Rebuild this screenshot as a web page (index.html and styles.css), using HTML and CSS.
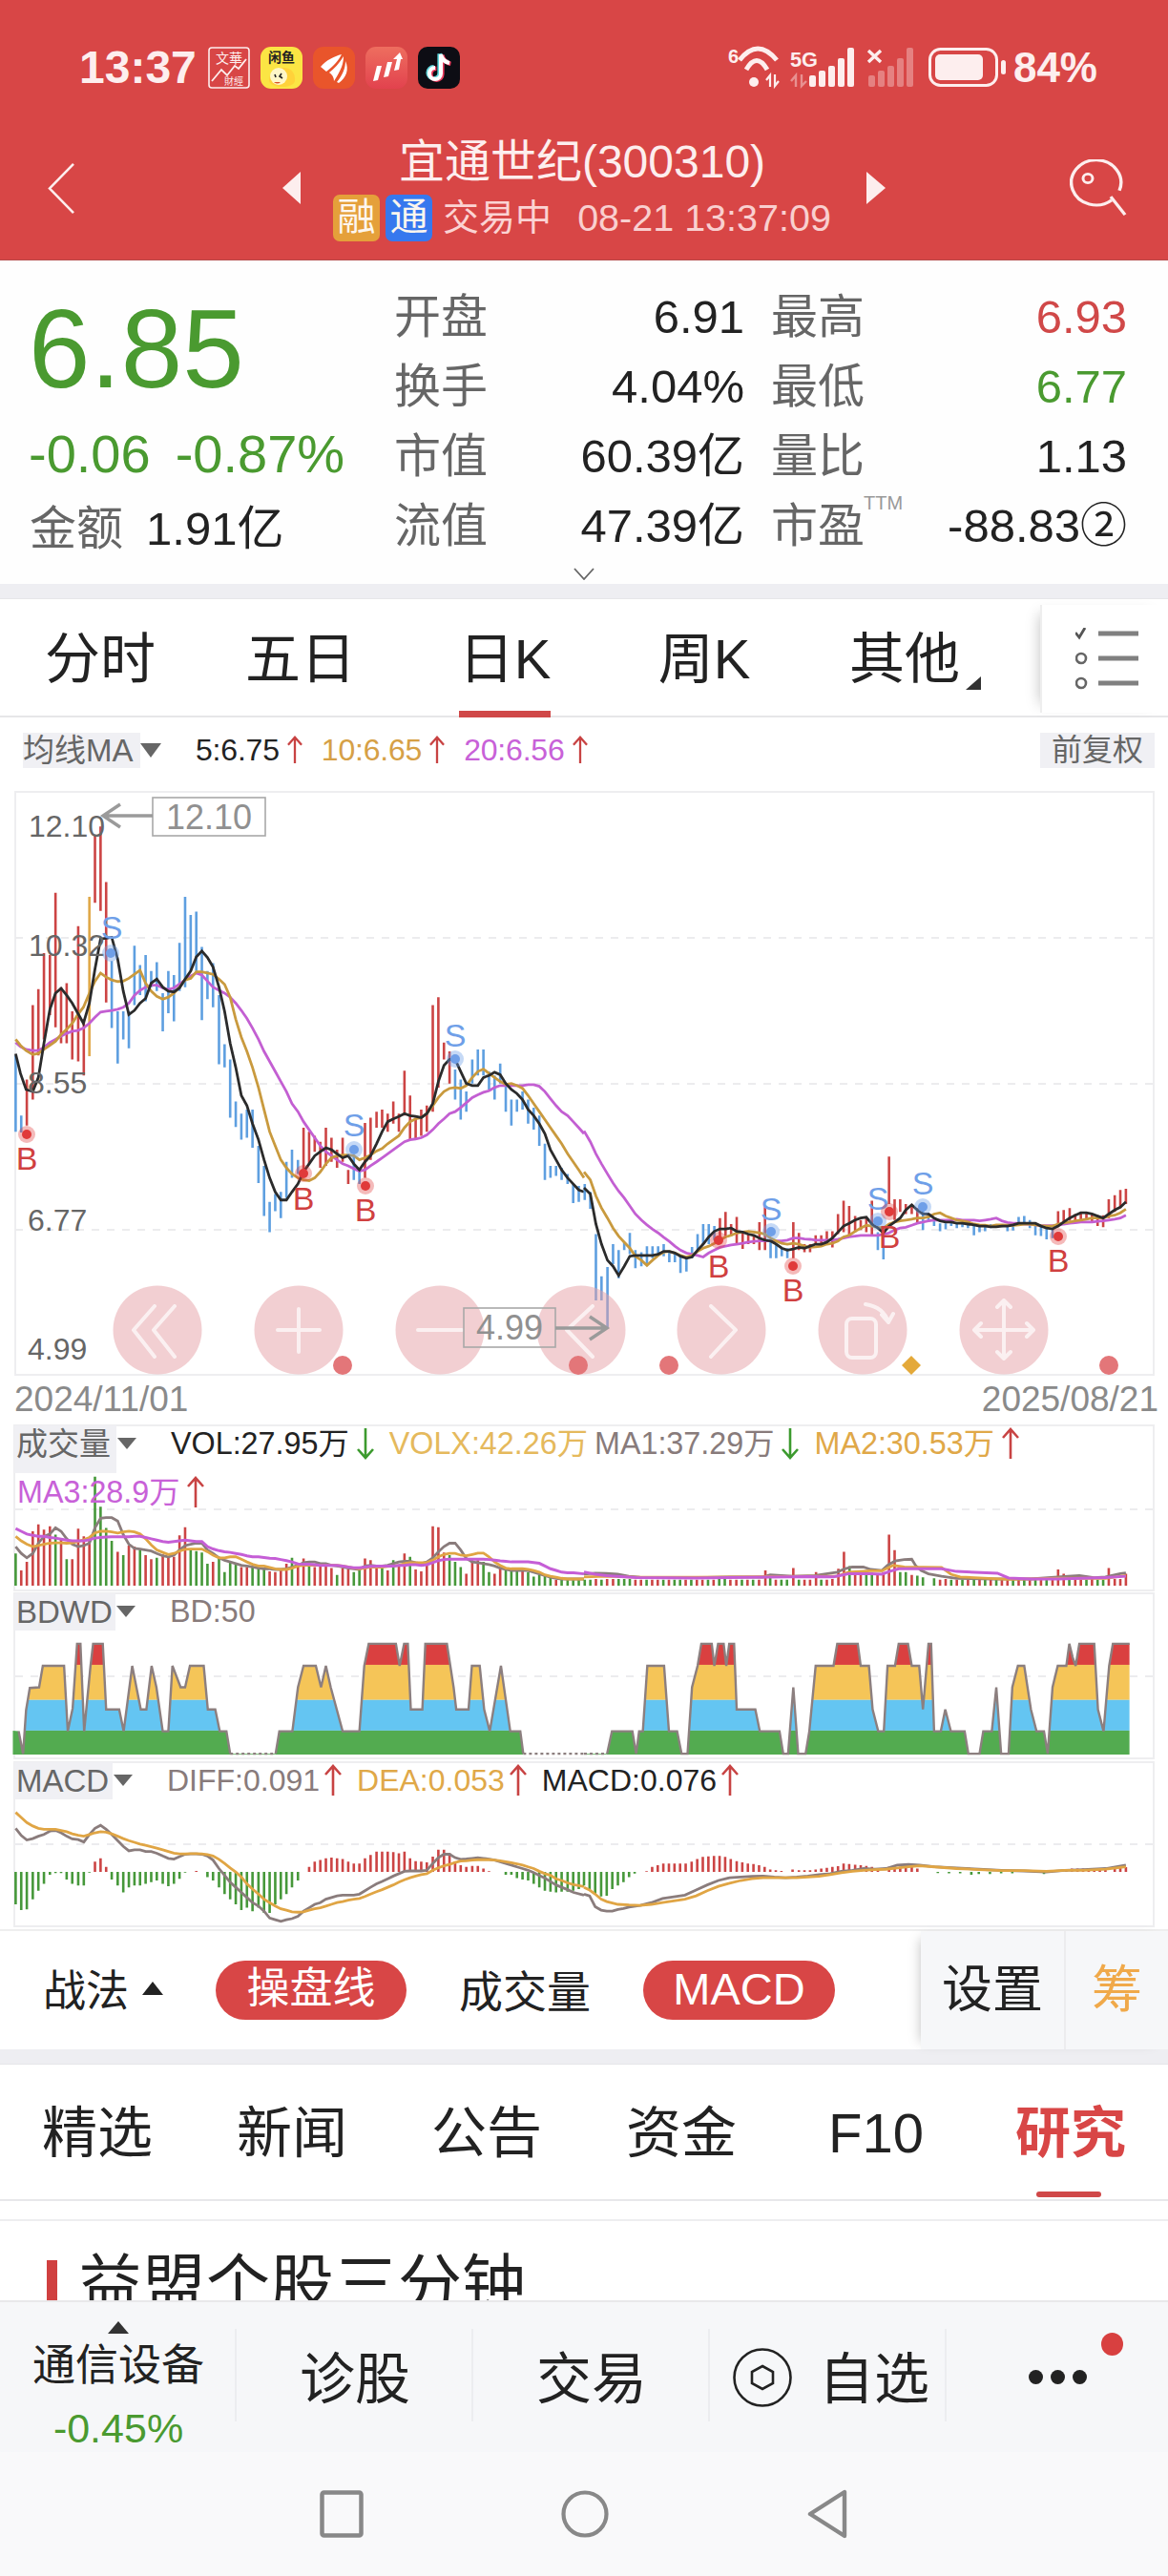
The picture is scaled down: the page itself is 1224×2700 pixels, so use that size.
FILE: index.html
```html
<!DOCTYPE html>
<html lang="zh-CN">
<head>
<meta charset="utf-8">
<title>宜通世纪(300310)</title>
<link rel="stylesheet" href="styles.css">
</head>
<body>
<svg class="defs" width="0" height="0" aria-hidden="true">
  <symbol id="arrow-up" viewBox="0 0 20 34"><path d="M10 33V2M2 11L10 2L18 11" fill="none" stroke="currentColor" stroke-width="2.6"/></symbol>
  <symbol id="arrow-down" viewBox="0 0 20 34"><path d="M10 1V32M2 23L10 32L18 23" fill="none" stroke="currentColor" stroke-width="2.6"/></symbol>
</svg>
<div class="page">
<header class="header">
  <div class="status">
    <span class="time">13:37</span>
    <div class="apps">
      <svg class="app" viewBox="0 0 44 44"><rect x="1" y="1" width="42" height="42" rx="3" fill="none" stroke="#fdeeee" stroke-width="1.6"/><text x="22" y="17" class="app-t" text-anchor="middle" font-size="14">文華</text><path d="M4 36L14 24L20 30L28 20L32 23L40 13" fill="none" stroke="#fdeeee" stroke-width="1.8"/><text x="27" y="40" class="app-t" text-anchor="middle" font-size="10">財經</text></svg>
      <svg class="app" viewBox="0 0 44 44"><rect width="44" height="44" rx="11" fill="#fbe544"/><text x="22" y="16" text-anchor="middle" font-size="14" font-weight="700" fill="#222" class="app-cjk">闲鱼</text><path d="M9 36C9 26 15 22 24 22C32 22 37 28 36 36C34 44 12 44 9 36Z" fill="#ffd23a"/><circle cx="19" cy="31" r="9" fill="#fff7c8"/><path d="M15 29l1 3M22 28l-2 3l3 2" stroke="#222" stroke-width="1.6" fill="none"/><path d="M14 37q4 3 7 0z" fill="#d8552a"/></svg>
      <svg class="app" viewBox="0 0 44 44"><rect width="44" height="44" rx="11" fill="#e9552b"/><path d="M8 21C14 14 22 10 30 8C27 14 22 20 14 26ZM17 27C22 23 28 17 32 10C32 17 30 24 22 36C22 32 20 29 17 27ZM25 37C31 30 34 22 34 15C38 24 35 32 27 38Z" fill="#fff"/></svg>
      <svg class="app" viewBox="0 0 44 44"><defs><linearGradient id="gr" x1="0" y1="0" x2="0" y2="1"><stop offset="0" stop-color="#ee6e5f"/><stop offset="1" stop-color="#e2424e"/></linearGradient></defs><rect width="44" height="44" rx="11" fill="url(#gr)"/><path d="M8 36L12 20L17 20L13 35ZM19 32L23 16L28 16L24 31ZM30 25L33 13L29 13L36 6L39 13L37 13L35 24Z" fill="#fff"/></svg>
      <svg class="app" viewBox="0 0 44 44"><rect width="44" height="44" rx="10" fill="#0d0d14"/><path d="M24 8V28A6 6 0 1 1 18 22M24 8C25 13 28 16 33 17" fill="none" stroke="#5fd6dc" stroke-width="4.4" transform="translate(-1.4 -0.8)"/><path d="M24 8V28A6 6 0 1 1 18 22M24 8C25 13 28 16 33 17" fill="none" stroke="#ee3b5e" stroke-width="4.4" transform="translate(1.4 0.8)"/><path d="M24 8V28A6 6 0 1 1 18 22M24 8C25 13 28 16 33 17" fill="none" stroke="#fff" stroke-width="4"/></svg>
    </div>
    <div class="sys">
      <svg class="net" viewBox="762 49 195 44">
        <text x="763" y="66" class="net-t" font-size="20">6</text>
        <g fill="none" stroke="#fdeeee" stroke-width="5"><path d="M775 63Q794 39 814 63"/><path d="M782 73Q793 54 804 73"/></g>
        <circle cx="790" cy="86" r="5" fill="#fdeeee"/>
        <path d="M807 91V79L803 84M812 78V90L816 85" fill="none" stroke="#fdeeee" stroke-width="2.2"/>
        <text x="828" y="70" class="net-t" font-size="22" textLength="29" lengthAdjust="spacingAndGlyphs">5G</text>
        <path d="M834 91V79L829 85M840 78V90L845 85" fill="none" stroke="#fdeeee" stroke-width="2.4" opacity=".45"/>
        <g fill="#fdeeee"><rect x="848" y="79" width="7" height="12" rx="2"/><rect x="858" y="74" width="7" height="17" rx="2"/><rect x="868" y="69" width="7" height="22" rx="2"/><rect x="878" y="61" width="7" height="30" rx="2"/><rect x="888" y="50" width="7" height="41" rx="2"/></g>
        <path d="M910 53L923 65M923 53L910 65" stroke="#fdeeee" stroke-width="3.4"/>
        <g fill="#fdeeee" opacity=".35"><rect x="910" y="79" width="7" height="12" rx="2"/><rect x="920" y="74" width="7" height="17" rx="2"/><rect x="930" y="69" width="7" height="22" rx="2"/><rect x="940" y="61" width="7" height="30" rx="2"/><rect x="950" y="50" width="7" height="41" rx="2"/></g>
      </svg>
      <svg class="batt" viewBox="0 0 81 44"><rect x="1.5" y="2.5" width="70" height="38" rx="11" fill="none" stroke="#fdeeee" stroke-width="3"/><rect x="7" y="8" width="50" height="27" rx="5" fill="#fdeeee"/><rect x="76" y="14" width="5" height="15" rx="2.5" fill="#fdeeee"/></svg>
      <span class="pct">84%</span>
    </div>
  </div>
  <div class="titlebar">
    <svg class="back" viewBox="0 0 28 56" preserveAspectRatio="none"><path d="M27 1L2 28L27 55" fill="none" stroke="#fdeeee" stroke-width="2.6"/></svg>
    <span class="tri-l"></span>
    <div class="title-block">
      <div class="title">宜通世纪(300310)</div>
      <div class="sub">
        <span class="badge badge-o">融</span><span class="badge badge-b">通</span>
        <span class="trading">交易中</span><span class="stamp">08-21 13:37:09</span>
      </div>
    </div>
    <span class="tri-r"></span>
    <svg class="search" viewBox="0 0 60 66" preserveAspectRatio="none"><path d="M44 47A26 26 0 1 1 52 36" fill="none" stroke="#fdeeee" stroke-width="3.4"/><circle cx="19" cy="22" r="5" fill="none" stroke="#fdeeee" stroke-width="3"/><path d="M43 43L58 64" stroke="#fdeeee" stroke-width="3.4"/></svg>
  </div>
</header>

<section class="quote">
  <div class="last">6.85</div>
  <div class="lab c2 r1">开盘</div><div class="val c3 r1">6.91</div><div class="lab c4 r1">最高</div><div class="val c5 r1 up">6.93</div>
  <div class="lab c2 r2">换手</div><div class="val c3 r2">4.04%</div><div class="lab c4 r2">最低</div><div class="val c5 r2 down">6.77</div>
  <div class="chg">-0.06<span class="chg-p">-0.87%</span></div>
  <div class="lab c2 r3">市值</div><div class="val c3 r3">60.39亿</div><div class="lab c4 r3">量比</div><div class="val c5 r3">1.13</div>
  <div class="amt"><span class="amt-l">金额</span><span class="amt-v">1.91亿</span></div>
  <div class="lab c2 r4">流值</div><div class="val c3 r4">47.39亿</div><div class="lab c4 r4 ttm-cell">市盈<span class="ttm">TTM</span></div><div class="val c5 r4">-88.83②</div>
  <svg class="more" viewBox="0 0 22 13" preserveAspectRatio="none"><path d="M1 1L11 12L21 1" fill="none" stroke="#666" stroke-width="1.8"/></svg>
</section>
<div class="band band-a"></div>

<nav class="tabs">
  <div class="tab"><span>分时</span></div>
  <div class="tab"><span>五日</span></div>
  <div class="tab tab-on"><span>日K</span></div>
  <div class="tab tab-week"><span>周K</span></div>
  <div class="tab tab-more"><span>其他</span></div>
  <div class="tab-menu">
    <svg viewBox="0 0 66 66" width="66" height="66"><path d="M0 5L4 10L10 0" fill="none" stroke="#555" stroke-width="2.8"/><circle cx="6" cy="32" r="5" fill="none" stroke="#666" stroke-width="2.6"/><circle cx="6" cy="58" r="5" fill="none" stroke="#666" stroke-width="2.6"/><path d="M24 6H66M24 32H66M24 58H66" stroke="#808080" stroke-width="5"/></svg>
  </div>
</nav>

<div class="ma-row">
  <span class="chip">均线MA</span><span class="caret"></span>
  <span class="ma ma-first c-black">5:6.75</span><svg class="ar ar-up"><use href="#arrow-up"/></svg>
  <span class="ma c-orange">10:6.65</span><svg class="ar ar-up"><use href="#arrow-up"/></svg>
  <span class="ma c-mag">20:6.56</span><svg class="ar ar-up"><use href="#arrow-up"/></svg>
  <span class="chip chip-end">前复权</span>
</div>

<svg class="kline c" viewBox="0 820 1224 622" width="1224" height="622">
  <rect x="16" y="830" width="1193" height="611" fill="none" stroke="#eeeef0" stroke-width="2"/>
  <path d="M16 983H1209M16 1136H1209M16 1289H1209" stroke="#ececee" stroke-width="2" stroke-dasharray="8 8" fill="none"/>
  <g transform="translate(0 820) scale(.3903 .4209)" fill="none">
    <path class="b" d="M42 680V870M57 830V872M300 445V612M316 570V700M331 570V640M346 570V662M361 407V555M376 455V530M391 430V545M406 470V510M421 448V520M437 525V620M452 470V575M467 480V595M482 400V520M497 285V510M512 330V470M527 322V470M542 410V592M557 470V540M572 450V560M588 530V702M603 652V710M618 690V835M633 795V858M648 825V890M663 815V885M678 815V910M694 905V998M709 955V1080M724 1045V1120M739 1025V1068M754 1020V1085M769 945V1035M784 915V985M800 940V975M950 930V990M965 960V1000M1222 715V790M1237 740V840M1252 770V820M1268 690V750M1283 665V730M1298 665V730M1313 720V765M1328 730V790M1343 700V750M1358 750V820M1373 790V855M1388 790V820M1403 770V815M1418 790V850M1433 810V865M1448 830V905M1463 900V990M1478 955V985M1493 955V980M1508 960V990M1524 975V1000M1539 1000V1048M1554 1005V1045"/>
    <path class="r" d="M72 740V855M88 555V790M103 515V680M118 425V640M134 430V580M149 275V610M164 510V650M179 500V650M194 570V690M210 358V695M225 590V730M255 130V300M270 110V320M285 248V548M815 860V965M830 870V950M845 880V920M860 895V960M875 860V955M890 885V945M905 915V960M920 885V945M935 965V1000M980 848V985M995 835V940M1011 820V860M1026 815V860M1041 825V870M1056 795V850M1071 825V870M1086 718V830M1101 780V890M1116 835V890M1131 815V880M1146 805V870M1162 555V820M1177 535V760M1192 648V690M1207 670V750"/>
    <path class="o" d="M240 285V682"/>
    <polyline class="l-mag" points="42,648 55,658 70,665 88,668 103,668 118,660 134,648 149,640 164,632 179,625 194,620 209,618 224,612 240,600 255,585 270,572 285,570 300,568 316,565 331,560 346,550 361,530 376,518 391,510 406,505 421,505 437,512 452,516 467,512 482,502 497,492 512,482 527,475 542,480 557,495 572,510 588,518 603,525 618,535 633,550 648,568 663,588 678,612 694,640 709,670 724,695 739,720 754,745 769,770 784,800 800,820 815,845 830,865 845,885 860,905 875,920 890,930 905,940 920,950 935,955 950,962 965,968 980,965 995,955 1011,945 1026,935 1041,925 1056,915 1071,905 1086,895 1101,890 1116,888 1131,885 1146,878 1162,865 1177,850 1192,838 1207,825 1222,820 1237,810 1252,798 1268,785 1283,778 1298,772 1313,768 1328,760 1343,755 1358,755 1373,755 1388,755 1403,755 1418,753 1433,753 1448,757 1463,770 1478,788 1493,805 1508,820 1524,830 1539,845 1554,860 1568,875"/>
    <polyline class="l-ora" points="42,640 55,655 70,668 88,678 103,675 118,665 134,655 149,645 164,628 179,615 194,600 209,578 224,560 240,525 255,495 270,475 285,485 300,492 316,496 331,495 346,488 361,478 376,468 391,500 406,520 421,533 437,540 452,535 467,525 482,510 497,492 512,488 527,472 542,472 557,475 572,478 588,490 603,503 618,535 633,590 648,635 663,670 678,710 694,760 709,815 724,870 739,905 754,940 769,960 784,975 800,985 815,990 830,992 845,985 860,970 875,950 890,935 905,930 920,928 935,928 950,930 965,940 980,935 995,928 1011,918 1026,912 1041,900 1056,890 1071,880 1086,860 1101,845 1116,838 1131,835 1146,825 1162,805 1177,785 1192,770 1207,762 1222,760 1237,762 1252,755 1268,735 1283,720 1298,714 1313,725 1328,735 1343,745 1358,752 1373,750 1388,755 1403,762 1418,780 1433,800 1448,820 1463,840 1478,860 1493,880 1508,900 1524,925 1539,945 1554,965 1568,985"/>
    <polyline class="l-blk" points="42,676 55,725 70,765 88,770 103,735 118,650 134,565 149,525 164,513 179,530 194,550 209,575 224,600 240,550 255,465 270,390 285,388 300,386 316,440 331,520 346,578 361,568 376,550 391,538 406,500 421,490 437,510 452,520 467,522 482,512 497,490 512,470 527,435 542,420 557,436 572,460 588,510 603,570 618,650 633,710 648,780 663,805 678,850 694,890 709,940 724,985 739,1020 754,1040 769,1040 784,1020 800,1000 815,970 830,950 845,930 860,920 875,910 890,915 905,925 920,935 935,930 950,950 965,965 980,945 995,930 1011,900 1026,870 1041,845 1056,838 1071,832 1086,825 1101,830 1116,832 1131,835 1146,825 1162,800 1177,745 1192,705 1207,690 1222,690 1237,720 1252,750 1268,755 1283,755 1298,735 1313,730 1328,722 1343,728 1358,750 1373,765 1388,775 1403,790 1418,815 1433,830 1448,850 1463,875 1478,915 1493,940 1508,965 1524,985 1539,1000 1554,1015 1568,1020"/>
  </g>
  <g transform="translate(612 820) scale(.3903 .4209)" fill="none">
    <path class="b" d="M2 1000V1040M17 1020V1062M32 1125V1290M47 1230V1290M63 1207V1358M78 1150V1200M93 1165V1235M108 1145V1165M123 1122V1175M138 1165V1210M154 1170V1205M169 1155V1200M184 1155V1185M199 1155V1180M214 1150V1180M229 1170V1195M244 1175V1195M259 1180V1222M275 1185V1218M290 1157V1185M305 1125V1165M320 1100V1150M335 1100V1150M350 1105V1140M501 1140V1185M516 1150V1185M531 1160V1180M546 1160V1185M789 1120V1165M804 1120V1188M910 1065V1115M925 1075V1095M940 1090V1105M956 1098V1118M971 1098V1113M986 1095V1105M1001 1095V1110M1016 1097V1108M1031 1097V1110M1047 1100V1128M1062 1105V1120M1077 1105V1118M1092 1100V1110M1107 1100V1108M1122 1100V1108M1137 1105V1118M1152 1100V1116M1167 1082V1105M1182 1080V1100M1197 1090V1110M1212 1100V1128M1227 1105V1130M1242 1112V1138M1258 1110V1135"/>
    <path class="r" d="M365 1085V1145M380 1070V1130M395 1100V1130M410 1082V1150M426 1120V1162M441 1125V1150M456 1130V1150M471 1095V1165M486 1055V1165M562 1095V1185M577 1122V1165M592 1150V1170M607 1150V1170M622 1128V1150M637 1128V1150M652 1118V1150M667 1118V1158M682 1075V1125M697 1042V1120M712 1055V1130M728 1080V1120M743 1090V1115M758 1085V1120M773 1042V1130M819 932V1050M834 1038V1090M849 1038V1070M864 1050V1075M880 1050V1075M895 1060V1095M1273 1068V1108M1288 1065V1098M1304 1060V1092M1319 1075V1095M1334 1070V1090M1349 1070V1090M1364 1075V1095M1379 1078V1105M1394 1078V1108M1409 1038V1085M1425 1028V1070M1440 1015V1060M1455 1012V1050"/>
    <polyline class="l-mag" points="0,868 17,895 32,925 47,950 63,975 78,998 93,1018 108,1035 123,1055 138,1075 154,1090 169,1102 184,1113 199,1122 214,1133 229,1143 244,1155 259,1165 275,1172 290,1175 305,1178 320,1182 335,1172 350,1165 365,1158 380,1155 395,1152 410,1150 426,1148 441,1145 456,1143 471,1142 486,1142 501,1142 516,1142 531,1142 546,1140 562,1135 577,1135 592,1137 607,1138 622,1140 637,1140 652,1140 667,1140 682,1138 697,1135 712,1132 728,1130 743,1128 758,1128 773,1128 789,1128 804,1125 819,1122 834,1115 849,1110 864,1108 880,1103 895,1098 910,1095 925,1092 940,1090 956,1090 971,1090 986,1090 1001,1088 1016,1090 1031,1090 1047,1090 1062,1092 1077,1090 1092,1088 1107,1085 1122,1092 1137,1096 1152,1098 1167,1098 1182,1100 1197,1100 1212,1102 1227,1104 1242,1104 1258,1104 1273,1103 1288,1100 1304,1098 1319,1097 1334,1095 1349,1095 1364,1095 1379,1093 1394,1092 1409,1090 1425,1088 1440,1085 1455,1078"/>
    <polyline class="l-ora" points="0,970 17,990 32,1030 47,1060 63,1085 78,1110 93,1130 108,1145 123,1160 138,1180 154,1190 169,1203 184,1190 199,1178 214,1170 229,1168 244,1172 259,1178 275,1182 290,1178 305,1168 320,1160 335,1155 350,1148 365,1140 380,1132 395,1128 410,1122 426,1120 441,1118 456,1120 471,1122 486,1125 501,1135 516,1142 531,1148 546,1150 562,1148 577,1150 592,1155 607,1158 622,1157 637,1155 652,1150 667,1148 682,1142 697,1132 712,1128 728,1118 743,1110 758,1103 773,1105 789,1108 804,1110 819,1100 834,1095 849,1092 864,1090 880,1088 895,1085 910,1085 925,1082 940,1075 956,1072 971,1080 986,1085 1001,1090 1016,1092 1031,1095 1047,1100 1062,1102 1077,1103 1092,1105 1107,1102 1122,1102 1137,1103 1152,1103 1167,1102 1182,1100 1197,1100 1212,1102 1227,1104 1242,1105 1258,1105 1273,1100 1288,1097 1304,1095 1319,1092 1334,1090 1349,1088 1364,1085 1379,1085 1394,1085 1409,1080 1425,1078 1440,1072 1455,1063"/>
    <polyline class="l-blk" points="0,1010 17,1025 32,1100 47,1150 63,1190 78,1205 93,1228 108,1205 123,1180 138,1178 154,1178 169,1178 184,1178 199,1175 214,1168 229,1168 244,1172 259,1180 275,1185 290,1182 305,1165 320,1150 335,1132 350,1118 365,1112 380,1112 395,1110 410,1118 426,1120 441,1125 456,1128 471,1135 486,1140 501,1142 516,1150 531,1160 546,1165 562,1162 577,1158 592,1160 607,1155 622,1150 637,1150 652,1145 667,1135 682,1120 697,1105 712,1098 728,1090 743,1085 758,1083 773,1100 789,1110 804,1122 819,1105 834,1095 849,1085 864,1065 880,1052 895,1065 910,1075 925,1075 940,1085 956,1092 971,1095 986,1095 1001,1098 1016,1098 1031,1100 1047,1102 1062,1105 1077,1105 1092,1107 1107,1107 1122,1105 1137,1105 1152,1102 1167,1098 1182,1098 1197,1098 1212,1098 1227,1105 1242,1110 1258,1112 1273,1105 1288,1095 1304,1085 1319,1078 1334,1072 1349,1072 1364,1075 1379,1080 1394,1085 1409,1075 1425,1065 1440,1058 1455,1045"/>
  </g>
  <g class="axis">
    <text x="30" y="877">12.10</text><text x="30" y="1002">10.32</text><text x="29" y="1146">8.55</text><text x="29" y="1290">6.77</text><text x="29" y="1425">4.99</text>
  </g>
  <g class="mark-s">
    <circle cx="116" cy="999" r="9" class="halo-b"/><circle cx="116" cy="999" r="5"/><text x="117" y="984">S</text>
    <circle cx="371" cy="1205" r="9" class="halo-b"/><circle cx="371" cy="1205" r="5"/><text x="371" y="1191">S</text>
    <circle cx="477" cy="1110" r="9" class="halo-b"/><circle cx="477" cy="1110" r="5"/><text x="477" y="1097">S</text>
    <circle cx="808" cy="1291" r="9" class="halo-b"/><circle cx="808" cy="1291" r="5"/><text x="808" y="1279">S</text>
    <circle cx="920" cy="1280" r="9" class="halo-b"/><circle cx="920" cy="1280" r="5"/><text x="920" y="1268">S</text>
    <circle cx="967" cy="1265" r="9" class="halo-b"/><circle cx="967" cy="1265" r="5"/><text x="967" y="1252">S</text>
  </g>
  <g class="mark-b">
    <circle cx="28" cy="1189" r="9" class="halo-r"/><circle cx="28" cy="1189" r="5"/><text x="28" y="1226">B</text>
    <circle cx="318" cy="1230" r="9" class="halo-r"/><circle cx="318" cy="1230" r="5"/><text x="318" y="1268">B</text>
    <circle cx="383" cy="1243" r="9" class="halo-r"/><circle cx="383" cy="1243" r="5"/><text x="383" y="1280">B</text>
    <circle cx="753" cy="1300" r="9" class="halo-r"/><circle cx="753" cy="1300" r="5"/><text x="753" y="1339">B</text>
    <circle cx="831" cy="1327" r="9" class="halo-r"/><circle cx="831" cy="1327" r="5"/><text x="831" y="1364">B</text>
    <circle cx="932" cy="1270" r="9" class="halo-r"/><circle cx="932" cy="1270" r="5"/><text x="932" y="1308">B</text>
    <circle cx="1109" cy="1296" r="9" class="halo-r"/><circle cx="1109" cy="1296" r="5"/><text x="1109" y="1333">B</text>
  </g>
  <g class="fab">
    <circle cx="165" cy="1394" r="46.5"/><circle cx="313" cy="1394" r="46.5"/><circle cx="461" cy="1394" r="46.5"/><circle cx="609" cy="1394" r="46.5"/><circle cx="756" cy="1394" r="46.5"/><circle cx="904" cy="1394" r="46.5"/><circle cx="1052" cy="1394" r="46.5"/>
  </g>
  <g class="fab-i">
    <path d="M162 1369L140 1394L162 1422M183 1369L161 1394L183 1422"/>
    <path d="M313 1372V1417M291 1394H335"/>
    <path d="M438 1394H484"/>
    <path d="M621 1369L594 1394L621 1422"/>
    <path d="M745 1369L771 1394L745 1422"/>
    <rect x="887" y="1382" width="31" height="41" rx="6"/>
    <path d="M907 1367Q926 1370 931 1386M931 1386L924 1378M931 1386L936 1377"/>
    <path d="M1052 1363V1424M1021 1394H1083M1045 1370L1052 1363L1059 1370M1045 1417L1052 1424L1059 1417M1028 1387L1021 1394L1028 1401M1076 1387L1083 1394L1076 1401"/>
  </g>
  <g class="hint">
    <rect x="160" y="836" width="118" height="40"/><text x="219" y="869">12.10</text>
    <path d="M160 855H108M126 843L108 855L126 867"/>
    <rect x="486" y="1371" width="96" height="41"/><text x="534" y="1404">4.99</text>
    <path d="M582 1392H634M618 1380L636 1392L618 1404"/>
  </g>
  <g class="tick">
    <circle cx="359" cy="1431" r="10"/><circle cx="606" cy="1431" r="10"/><circle cx="701" cy="1431" r="10"/><circle cx="1162" cy="1431" r="10"/>
    <path class="tick-d" d="M955 1421L965 1431L955 1441L945 1431Z"/>
  </g>
</svg>

<div class="dates"><span>2024/11/01</span><span>2025/08/21</span></div>

<section class="pane pane-1">
  <svg class="pane-svg c" viewBox="0 1492 1224 176" width="1224" height="176">
    <rect x="15" y="1494" width="1194" height="173" fill="none" stroke="#eeeef0" stroke-width="2"/>
    <path d="M16 1582H1209" stroke="#ececee" stroke-width="2" stroke-dasharray="8 8" fill="none"/>
    <g transform="translate(0 1480) scale(.3903 .3571)" fill="none">
      <path class="g" d="M42 415V510M149 360V510M179 432V510M255 190V510M270 278V510M285 340V510M300 378V510M331 420V510M376 405V510M421 428V510M512 405V510M527 408V510M542 412V510M557 445V510M588 430V510M603 470V510M618 440V510M633 445V510M678 455V510M694 455V510M709 458V510M784 428V510M830 448V510M905 478V510M950 470V510M965 462V510M1026 458V510M1056 435V510M1101 425V510M1207 420V510M1222 440V510M1237 455V510M1298 440V510M1313 470V510M1358 465V510M1373 465V510M1388 465V510M1418 470V510M1433 483V510M1448 478V510M1463 478V510M1478 485V510M1508 492V510M1524 492V510M1539 492V510M1554 492V510"/>
      <path class="r" d="M57 465V510M72 440V510M88 350V510M103 330V510M118 345V510M134 335V510M164 375V510M194 432V510M210 342V510M225 365V510M240 370V510M316 410V510M346 392V510M361 395V510M391 420V510M406 432V510M437 418V510M452 425V510M467 425V510M482 362V510M497 338V510M572 440V510M648 455V510M663 455V510M724 468V510M739 470V510M754 465V510M769 445V510M800 450V510M815 430V510M845 455V510M860 448V510M875 445V510M890 458V510M920 458V510M935 462V510M980 430V510M995 435V510M1011 458V510M1041 465V510M1071 450V510M1086 415V510M1116 462V510M1131 468V510M1146 450V510M1162 335V510M1177 338V510M1192 412V510M1252 475V510M1268 435V510M1283 435V510M1328 475V510M1343 455V510M1403 468V510M1493 493V510"/>
      <polyline class="l-ma1" points="42,395 57,415 72,428 88,415 103,385 118,365 134,358 149,340 164,350 179,372 194,388 210,395 225,392 240,385 255,340 270,312 285,310 300,310 316,320 331,360 346,388 361,400 376,402 391,405 406,408 421,415 437,422 452,425 467,420 482,405 497,392 512,388 527,385 542,385 557,405 572,415 588,428 603,435 618,440 633,445 648,450 663,452 678,455 694,458 709,460 724,460 739,462 754,462 769,460 784,455 800,450 815,442 830,440 845,440 860,445 875,445 890,450 905,452 920,455 935,458 950,460 965,462 980,452 995,450 1011,452 1026,452 1041,450 1056,445 1071,440 1086,438 1101,438 1116,442 1131,445 1146,440 1162,428 1177,410 1192,395 1207,385 1222,385 1237,405 1252,430 1268,440 1283,442 1298,445 1313,448 1328,452 1343,458 1358,462 1373,465 1388,465 1403,465 1418,465 1433,470 1448,475 1463,480 1478,485 1493,488 1508,490 1524,490 1540,490 1568,490"/>
      <polyline class="l-ma2" points="42,365 57,378 72,388 88,395 103,392 118,388 134,385 149,384 164,384 179,385 194,384 210,380 225,375 240,368 255,355 270,350 285,350 300,352 316,355 331,352 346,350 361,352 376,358 391,372 406,390 421,405 437,412 452,418 467,415 482,408 497,403 512,402 527,402 542,402 557,410 572,420 588,428 603,428 618,425 633,425 648,432 663,440 678,447 694,452 709,452 724,456 739,460 754,462 769,462 784,458 800,452 815,450 830,450 845,450 860,450 875,450 890,450 905,450 920,452 935,455 950,458 965,460 980,458 995,455 1011,455 1026,455 1041,453 1056,452 1071,450 1086,445 1101,442 1116,442 1131,442 1146,442 1162,435 1177,425 1192,418 1207,415 1222,415 1237,420 1252,422 1268,418 1283,414 1298,414 1313,425 1328,440 1343,450 1358,458 1373,460 1388,460 1403,460 1418,462 1433,465 1448,470 1463,478 1478,482 1493,485 1508,488 1524,490 1568,490"/>
      <polyline class="l-ma3" points="42,342 57,350 72,358 88,362 103,365 118,365 134,368 149,370 164,373 179,376 194,378 210,378 225,378 240,375 255,370 270,368 285,367 300,366 316,366 331,366 346,366 361,365 376,365 391,368 406,372 421,376 437,380 452,382 467,380 482,378 497,376 512,378 527,380 542,380 557,395 572,402 588,407 603,410 618,412 633,415 648,418 663,422 678,425 694,425 709,427 724,429 739,430 754,433 769,436 784,440 800,446 815,447 830,447 845,448 860,450 875,450 890,450 905,450 920,452 935,455 950,457 965,457 980,455 995,453 1011,452 1026,452 1041,452 1056,452 1071,450 1086,450 1101,448 1116,448 1131,450 1146,448 1162,442 1177,436 1192,433 1207,432 1222,432 1237,432 1252,432 1268,432 1283,432 1298,432 1313,433 1328,435 1343,437 1358,438 1373,440 1388,440 1403,440 1418,440 1433,442 1448,444 1463,452 1478,460 1493,465 1508,470 1524,472 1540,472 1568,475"/>
    </g>
    <g transform="translate(612 1480) scale(.3903 .3571)" fill="none">
      <path class="g" d="M2 492V510M17 492V510M47 492V510M93 490V510M108 490V510M123 490V510M168 492V510M213 492V510M243 492V510M258 492V510M288 492V510M333 492V510M363 488V510M378 485V510M424 492V510M454 492V510M500 482V510M530 492V510M545 492V510M577 492V510M637 492V510M713 452V510M758 470V510M773 472V510M849 470V510M864 470V510M895 480V510M910 485V510M940 488V510M986 492V510M1016 492V510M1047 492V510M1077 492V510M1107 492V510M1152 492V510M1182 492V510M1212 492V510M1242 492V510M1303 492V510M1349 492V510M1379 492V510M1394 492V510"/>
      <path class="r" d="M32 490V510M62 490V510M78 490V510M138 492V510M153 492V510M183 492V510M198 492V510M228 492V510M273 492V510M303 492V510M318 492V510M348 492V510M393 492V510M409 492V510M439 492V510M470 492V510M487 465V510M515 492V510M562 458V510M592 492V510M607 492V510M623 470V510M652 492V510M667 490V510M683 460V510M698 410V510M728 470V510M743 470V510M788 475V510M804 470V510M819 360V510M834 405V510M880 478V510M956 492V510M971 490V510M1001 492V510M1031 492V510M1062 492V510M1092 492V510M1122 492V510M1137 492V510M1167 492V510M1197 492V510M1227 492V510M1258 492V510M1273 462V510M1288 475V510M1319 492V510M1334 492V510M1364 490V510M1409 458V510M1425 490V510M1440 490V510M1455 475V510"/>
      <polyline class="l-ma1" points="0,476 30,473 60,474 90,476 120,482 150,485 300,486 400,484 480,485 500,478 530,480 560,482 620,480 680,470 700,460 720,455 750,455 770,462 800,465 815,450 835,437 860,433 880,432 890,450 905,465 925,475 960,482 1000,488 1100,490 1200,490 1272,484 1300,482 1330,480 1370,486 1400,484 1440,474 1455,472"/>
      <polyline class="l-ma2" points="0,484 60,482 140,485 300,485 600,482 680,482 710,470 770,466 800,466 815,458 830,450 860,455 960,456 985,476 1010,484 1140,491 1272,488 1400,488 1455,480"/>
      <polyline class="l-ma3" points="0,470 30,476 60,480 100,483 140,486 300,487 600,483 670,484 710,475 770,475 800,476 820,468 845,460 900,460 960,460 1000,468 1110,473 1140,487 1200,490 1272,490 1400,486 1455,482"/>
    </g>
  </svg>
  <div class="head head-tall">
    <span class="chip chip-p chip-tall chip-vol">成交量</span><span class="caret caret-p"></span>
    <span class="lg lg-first c-black">VOL:27.95万</span><svg class="ar ar-dn"><use href="#arrow-down"/></svg>
    <span class="lg c-yel">VOLX:42.26万</span>
    <span class="lg c-gray">MA1:37.29万</span><svg class="ar ar-dn"><use href="#arrow-down"/></svg>
    <span class="lg c-ora2">MA2:30.53万</span><svg class="ar ar-up"><use href="#arrow-up"/></svg>
  </div>
  <div class="head head-2"><span class="lg c-mag2">MA3:28.9万</span><svg class="ar ar-up"><use href="#arrow-up"/></svg></div>
</section>

<section class="pane pane-2">
  <svg class="pane-svg c" viewBox="0 1668 1224 177" width="1224" height="177">
    <defs>
      <clipPath id="bd-l"><polygon points="34,935 50,937 62,1003 70,875 80,810 105,808 115,745 172,745 182,937 195,870 207,680 216,680 226,937 243,745 250,680 276,680 285,873 320,873 332,937 355,745 378,873 393,873 407,745 420,808 437,937 452,937 463,745 485,808 497,808 510,745 547,745 558,873 578,873 590,937 608,937 618,1003 740,1003 750,937 785,937 800,808 815,745 848,745 862,808 875,745 888,808 920,937 965,937 978,745 990,680 1063,680 1073,745 1085,680 1095,680 1103,873 1134,873 1142,680 1200,680 1218,808 1225,873 1258,873 1267,745 1288,745 1300,873 1315,937 1345,745 1370,937 1397,937 1405,1003 1405,1006 34,1006"/></clipPath>
      <clipPath id="bd-r"><polygon points="0,1003 62,1003 75,937 130,937 140,1003 148,937 158,937 170,745 215,745 228,937 250,937 262,1003 278,1003 290,808 305,745 315,680 343,680 350,745 360,680 375,680 382,745 390,680 403,680 410,873 460,873 472,937 525,937 535,1003 548,1003 562,808 575,1003 595,1003 605,937 622,745 670,745 680,680 735,680 743,745 765,745 775,873 790,937 805,937 815,745 835,745 845,680 870,680 880,745 900,745 910,873 925,680 932,680 940,937 958,937 970,873 985,937 1022,937 1032,1003 1062,1003 1072,937 1095,937 1107,808 1120,1003 1140,1003 1150,808 1165,745 1182,745 1200,873 1215,937 1235,937 1245,1003 1258,808 1272,745 1295,745 1303,680 1312,720 1320,745 1330,680 1370,680 1380,873 1395,937 1410,745 1420,680 1465,680 1465,1006 0,1006"/></clipPath>
    </defs>
    <rect x="15" y="1670" width="1194" height="173" fill="none" stroke="#eeeef0" stroke-width="2"/>
    <path d="M16 1757H1209" stroke="#ececee" stroke-width="2" stroke-dasharray="8 8" fill="none"/>
    <g transform="translate(0 1480) scale(.3903 .3571)" fill="none">
      <g clip-path="url(#bd-l)"><rect x="0" y="678" width="1568" height="64" fill="#da4040"/><rect x="0" y="742" width="1568" height="103" fill="#f5c558"/><rect x="0" y="845" width="1568" height="90" fill="#64c5f2"/><rect x="0" y="935" width="1568" height="71" fill="#53ab50"/></g>
      <polyline class="l-bd" points="50,937 62,1003 70,875 80,810 105,808 115,745 172,745 182,937 195,870 207,680 216,680 226,937 243,745 250,680 276,680 285,873 320,873 332,937 355,745 378,873 393,873 407,745 420,808 437,937 452,937 463,745 485,808 497,808 510,745 547,745 558,873 578,873 590,937 608,937 618,1003"/>
      <polyline class="l-bd l-dot" points="618,1003 740,1003"/>
      <polyline class="l-bd" points="740,1003 750,937 785,937 800,808 815,745 848,745 862,808 875,745 888,808 920,937 965,937 978,745 990,680 1063,680 1073,745 1085,680 1095,680 1103,873 1134,873 1142,680 1200,680 1218,808 1225,873 1258,873 1267,745 1288,745 1300,873 1315,937 1345,745 1370,937 1397,937 1405,1003"/>
      <polyline class="l-bd l-dot" points="1405,1003 1568,1003"/>
    </g>
    <g transform="translate(612 1480) scale(.3903 .3571)" fill="none">
      <g clip-path="url(#bd-r)"><rect x="0" y="678" width="1568" height="64" fill="#da4040"/><rect x="0" y="742" width="1568" height="103" fill="#f5c558"/><rect x="0" y="845" width="1568" height="90" fill="#64c5f2"/><rect x="0" y="935" width="1568" height="71" fill="#53ab50"/></g>
      <polyline class="l-bd l-dot" points="0,1003 62,1003"/>
      <polyline class="l-bd" points="62,1003 75,937 130,937 140,1003 148,937 158,937 170,745 215,745 228,937 250,937 262,1003 278,1003 290,808 305,745 315,680 343,680 350,745 360,680 375,680 382,745 390,680 403,680 410,873 460,873 472,937 525,937 535,1003 548,1003 562,808 575,1003 595,1003 605,937 622,745 670,745 680,680 735,680 743,745 765,745 775,873 790,937 805,937 815,745 835,745 845,680 870,680 880,745 900,745 910,873 925,680 932,680 940,937 958,937 970,873 985,937 1022,937 1032,1003 1062,1003 1072,937 1095,937 1107,808 1120,1003 1140,1003 1150,808 1165,745 1182,745 1200,873 1215,937 1235,937 1245,1003 1258,808 1272,745 1295,745 1303,680 1312,720 1320,745 1330,680 1370,680 1380,873 1395,937 1410,745 1420,680 1465,680"/>
    </g>
  </svg>
  <div class="head">
    <span class="chip chip-p chip-bd">BDWD</span><span class="caret caret-p"></span>
    <span class="lg lg-first c-gray">BD:50</span>
  </div>
</section>

<section class="pane pane-3">
  <svg class="pane-svg c" viewBox="0 1845 1224 177" width="1224" height="177">
    <rect x="15" y="1847" width="1194" height="172" fill="none" stroke="#eeeef0" stroke-width="2"/>
    <path d="M16 1933H1209" stroke="#ececee" stroke-width="2" stroke-dasharray="8 8" fill="none"/>
    <g transform="translate(0 1480) scale(.3903 .3571)" fill="none">
      <path class="g" d="M42 1350V1445M57 1350V1462M72 1350V1460M88 1350V1430M103 1350V1405M118 1350V1385M134 1350V1358M149 1350V1353M164 1350V1353M179 1350V1372M194 1350V1385M210 1350V1390M225 1350V1390M240 1350V1352M300 1350V1372M316 1350V1390M331 1350V1410M346 1350V1395M361 1350V1390M376 1350V1390M391 1350V1385M406 1350V1380M421 1350V1375M437 1350V1385M452 1350V1392M467 1350V1385M482 1350V1370M497 1350V1352M557 1350V1365M572 1350V1375M588 1350V1395M603 1350V1415M618 1350V1430M633 1350V1445M648 1350V1462M663 1350V1455M678 1350V1465M694 1350V1455M709 1350V1470M724 1350V1470M739 1350V1445M754 1350V1430M769 1350V1415M784 1350V1395M800 1350V1375M1358 1350V1358M1373 1350V1358M1388 1350V1368M1403 1350V1372M1418 1350V1375M1433 1350V1385M1448 1350V1395M1463 1350V1405M1478 1350V1408M1493 1350V1410M1508 1350V1408M1524 1350V1408M1539 1350V1405M1554 1350V1400"/>
      <path class="r" d="M255 1350V1320M270 1350V1310M285 1350V1335M527 1350V1347M830 1350V1335M845 1350V1320M860 1350V1315M875 1350V1310M890 1350V1308M905 1350V1310M920 1350V1312M935 1350V1320M950 1350V1325M965 1350V1325M980 1350V1310M995 1350V1300M1011 1350V1290M1026 1350V1290M1041 1350V1290M1056 1350V1292M1071 1350V1295M1086 1350V1290M1101 1350V1310M1116 1350V1318M1131 1350V1320M1146 1350V1322M1162 1350V1305M1177 1350V1285M1192 1350V1285M1207 1350V1295M1222 1350V1320M1237 1350V1330M1252 1350V1335M1268 1350V1332M1283 1350V1332M1298 1350V1340M1313 1350V1348"/>
      <polyline class="l-ma1" points="42,1222 57,1243 72,1256 88,1252 103,1245 118,1240 134,1230 149,1228 164,1235 179,1245 194,1253 210,1255 225,1262 240,1240 255,1222 270,1213 285,1225 300,1240 316,1258 331,1275 346,1288 361,1285 376,1285 391,1290 406,1290 421,1295 437,1303 452,1310 467,1312 482,1305 497,1298 512,1297 527,1297 542,1298 557,1303 572,1315 588,1340 603,1360 618,1380 633,1395 648,1410 663,1425 678,1440 694,1450 709,1465 724,1485 739,1490 754,1495 769,1490 784,1487 800,1480 815,1465 830,1455 845,1445 860,1440 875,1430 890,1425 905,1420 920,1418 935,1418 950,1418 965,1415 980,1405 995,1395 1011,1385 1026,1378 1041,1370 1056,1362 1071,1355 1086,1348 1101,1347 1116,1347 1131,1347 1146,1345 1162,1325 1177,1308 1192,1298 1207,1298 1222,1308 1237,1313 1252,1312 1268,1310 1283,1308 1298,1310 1313,1312 1328,1315 1343,1320 1358,1325 1373,1330 1388,1335 1403,1340 1418,1345 1433,1352 1448,1360 1463,1368 1478,1378 1493,1388 1508,1395 1524,1402 1540,1410 1568,1418"/>
      <polyline class="l-ma2" points="42,1175 57,1190 72,1205 88,1215 103,1222 118,1225 134,1225 149,1225 164,1228 179,1232 194,1238 210,1242 225,1245 240,1240 255,1235 270,1232 285,1233 300,1238 316,1245 331,1252 346,1258 361,1263 376,1268 391,1272 406,1276 421,1280 437,1285 452,1290 467,1295 482,1297 497,1297 512,1296 527,1296 542,1297 557,1299 572,1303 588,1313 603,1325 618,1338 633,1350 648,1365 663,1385 678,1400 694,1415 709,1430 724,1440 739,1450 754,1458 769,1462 784,1467 800,1468 815,1467 830,1462 845,1458 860,1455 875,1450 890,1445 905,1440 920,1437 935,1433 950,1430 965,1428 980,1422 995,1415 1011,1408 1026,1402 1041,1395 1056,1388 1071,1380 1086,1373 1101,1367 1116,1362 1131,1358 1146,1355 1162,1345 1177,1338 1192,1332 1207,1328 1222,1322 1237,1318 1252,1317 1268,1315 1283,1314 1298,1314 1313,1314 1328,1315 1343,1317 1358,1320 1373,1323 1388,1326 1403,1330 1418,1335 1433,1340 1448,1348 1463,1355 1478,1360 1493,1370 1508,1375 1524,1382 1540,1387 1568,1393"/>
    </g>
    <g transform="translate(612 1480) scale(.3903 .3571)" fill="none">
      <path class="g" d="M0 1350V1390M15 1350V1400M30 1350V1415M46 1350V1422M61 1350V1420M76 1350V1400M91 1350V1390M106 1350V1380M121 1350V1365M136 1350V1355M950 1350V1353M980 1350V1354M1010 1350V1354M1040 1350V1358M1060 1350V1356M1090 1350V1356M1120 1350V1354M1150 1350V1354M1235 1350V1356"/>
      <path class="r" d="M168 1350V1348M183 1350V1335M198 1350V1330M213 1350V1325M228 1350V1325M243 1350V1325M258 1350V1325M273 1350V1325M289 1350V1320M304 1350V1312M319 1350V1306M334 1350V1304M349 1350V1303M364 1350V1303M379 1350V1306M394 1350V1312M410 1350V1318M425 1350V1322M440 1350V1325M455 1350V1327M470 1350V1330M485 1350V1335M500 1350V1343M515 1350V1345M530 1350V1347M560 1350V1343M577 1350V1345M592 1350V1345M607 1350V1345M622 1350V1343M637 1350V1340M652 1350V1338M667 1350V1335M682 1350V1333M697 1350V1325M712 1350V1327M728 1350V1329M743 1350V1330M758 1350V1332M773 1350V1335M789 1350V1340M819 1350V1335M834 1350V1335M849 1350V1335M864 1350V1335M880 1350V1335M895 1350V1340M1280 1350V1344M1295 1350V1342M1310 1350V1340M1325 1350V1340M1340 1350V1340M1355 1350V1340M1370 1350V1342M1385 1350V1342M1400 1350V1342M1425 1350V1340M1440 1350V1338M1455 1350V1336"/>
      <polyline class="l-ma1" points="0,1415 15,1420 30,1452 46,1462 61,1465 76,1465 91,1460 106,1457 121,1453 151,1448 181,1440 211,1428 241,1423 271,1418 301,1403 331,1388 361,1375 391,1367 421,1365 451,1363 481,1362 511,1365 541,1367 571,1365 601,1362 631,1358 661,1355 691,1348 721,1345 751,1340 781,1342 811,1340 841,1330 871,1328 901,1330 941,1335 1001,1338 1061,1342 1121,1345 1181,1347 1241,1350 1291,1345 1341,1343 1401,1340 1455,1330"/>
      <polyline class="l-ma2" points="0,1395 15,1403 30,1415 46,1430 61,1437 91,1445 121,1447 151,1448 181,1445 211,1440 241,1435 271,1430 301,1420 331,1405 361,1392 391,1383 421,1375 451,1370 481,1367 511,1367 541,1367 571,1367 601,1365 631,1363 661,1358 691,1352 721,1348 751,1345 781,1343 811,1342 841,1338 871,1335 901,1332 941,1335 1001,1340 1061,1343 1121,1346 1181,1346 1241,1348 1291,1345 1341,1345 1401,1342 1455,1335"/>
    </g>
  </svg>
  <div class="head">
    <span class="chip chip-p chip-md">MACD</span><span class="caret caret-p"></span>
    <span class="lg lg-first c-gray">DIFF:0.091</span><svg class="ar ar-up"><use href="#arrow-up"/></svg>
    <span class="lg c-ora2">DEA:0.053</span><svg class="ar ar-up"><use href="#arrow-up"/></svg>
    <span class="lg c-black">MACD:0.076</span><svg class="ar ar-up"><use href="#arrow-up"/></svg>
  </div>
</section>

<div class="strategy">
  <span class="st-label">战法</span><span class="st-tri"></span>
  <span class="pill pill-1">操盘线</span>
  <span class="st-item">成交量</span>
  <span class="pill pill-2">MACD</span>
  <div class="st-right"><span class="st-set">设置</span><span class="st-chip">筹</span></div>
</div>
<div class="band band-b"></div>

<nav class="stabs">
  <div class="stab">精选</div><div class="stab">新闻</div><div class="stab">公告</div><div class="stab">资金</div><div class="stab">F10</div><div class="stab stab-on">研究</div>
</nav>
<div class="spacer"></div>
<div class="section"><span class="sec-bar"></span><span class="sec-title">益盟个股三分钟</span></div>

<div class="bottom">
  <div class="cell cell-first"><span class="cell-tri"></span><span class="cell-name">通信设备</span><span class="cell-val">-0.45%</span></div>
  <div class="cell"><span class="cell-t">诊股</span></div>
  <div class="cell"><span class="cell-t">交易</span></div>
  <div class="cell cell-watch"><svg viewBox="0 0 62 62" width="62" height="62"><circle cx="31" cy="31" r="29.5" fill="none" stroke="#222" stroke-width="2.6"/><path d="M31 19L42 25V37L31 43L20 37V25Z" fill="none" stroke="#222" stroke-width="2.6"/></svg><span class="cell-t">自选</span></div>
  <div class="cell cell-more"><span class="dot"></span><span class="dot"></span><span class="dot"></span><span class="notice"></span></div>
</div>
<div class="sysnav">
  <svg width="46" height="50" viewBox="0 0 46 50"><rect x="2.5" y="2.5" width="41" height="45" rx="2" fill="none" stroke="#888" stroke-width="4.5"/></svg>
  <svg width="50" height="50" viewBox="0 0 50 50"><circle cx="25" cy="25" r="22.5" fill="none" stroke="#888" stroke-width="4.2"/></svg>
  <svg width="44" height="52" viewBox="0 0 44 52"><path d="M40 3V49L4 26Z" fill="none" stroke="#888" stroke-width="4.4" stroke-linejoin="round"/></svg>
</div>
</div>
</body>
</html>
```
FILE: styles.css
```css
* { box-sizing: border-box; }
html, body { margin: 0; padding: 0; background: #fff; }
body { font-family: "Liberation Sans", "Noto Sans CJK SC", sans-serif; color: #222; }
.defs { position: absolute; }
.page { width: 1224px; height: 2700px; overflow: hidden; }

/* header */
.header { height: 273px; background: #d84646; border-bottom: 1px solid #b54a4a; color: #fdeeee; padding-top: 49px; }
.status { display: flex; align-items: center; height: 44px; padding: 0 74px 0 83px; }
.time { font-size: 48px; font-weight: 700; width: 135px; line-height: 44px; white-space: nowrap; }
.apps { display: flex; gap: 11px; }
.app { width: 44px; height: 44px; display: block; }
.app-t, .app-cjk { font-family: "Noto Sans CJK SC", sans-serif; fill: #fdeeee; }
.app-cjk { fill: #222; }
.sys { margin-left: auto; display: flex; align-items: center; }
.net { width: 195px; height: 44px; display: block; margin-right: 16px; overflow: visible; }
.net-t { font-family: "Liberation Sans", sans-serif; font-weight: 700; fill: #fdeeee; }
.batt { width: 81px; height: 44px; display: block; margin-right: 8px; }
.pct { font-size: 44px; font-weight: 700; line-height: 44px; }

.titlebar { display: flex; align-items: center; height: 112px; margin-top: 48px; padding-left: 50px; }
.back { width: 28px; height: 53px; margin-right: 218px; }
.tri-l, .tri-r { width: 0; height: 0; border-top: 17px solid transparent; border-bottom: 17px solid transparent; }
.tri-l { border-right: 19px solid #fdeeee; margin-right: 35px; }
.tri-r { border-left: 20px solid #fdeeee; margin-left: 38px; margin-right: 193px; }
.title-block { width: 520px; display: flex; flex-direction: column; align-items: center; }
.title { font-size: 48px; line-height: 56px; white-space: nowrap; }
.sub { display: flex; align-items: center; height: 49px; margin-top: 6px; white-space: nowrap; }
.badge { width: 49px; height: 49px; border-radius: 7px; text-align: center; font-size: 40px; line-height: 46px; color: #fdf6ee; margin-right: 6px; }
.badge-o { background: #e5a03a; }
.badge-b { background: #3678ee; }
.trading { font-size: 38px; margin-left: 5px; line-height: 46px; color: #fbd3d3; }
.stamp { font-size: 39.5px; margin-left: 27px; color: #f9cfcf; line-height: 46px; }
.search { width: 60px; height: 60px; }

/* quote */
.quote { position: relative; height: 339px; padding-top: 23px; background: #fefefe; display: grid; grid-template-columns: 413px 97px 270px 125px 276px; grid-template-rows: repeat(4, 73px); align-items: center; }
.lab { font-size: 49px; color: #666; line-height: 73px; white-space: nowrap; }
.val { font-size: 49px; text-align: right; line-height: 73px; color: #222; white-space: nowrap; }
.c2 { grid-column: 2; } .c3 { grid-column: 3; } .c4 { grid-column: 4; padding-left: 28px; } .c5 { grid-column: 5; }
.r1 { grid-row: 1; } .r2 { grid-row: 2; } .r3 { grid-row: 3; } .r4 { grid-row: 4; }
.up { color: #d04848; } .down { color: #4a9a30; }
.last { grid-column: 1; grid-row: 1 / span 2; padding-left: 30px; font-size: 116px; color: #4a9a30; line-height: 146px; margin-top: -6px; }
.chg { grid-column: 1; grid-row: 3; padding-left: 30px; font-size: 56px; color: #4a9a30; white-space: nowrap; margin-top: -6px; }
.chg-p { margin-left: 26px; }
.amt { grid-column: 1; grid-row: 4; padding-left: 31px; white-space: nowrap; margin-top: -4px; }
.amt-l { font-size: 49px; color: #666; }
.amt-v { font-size: 49px; margin-left: 24px; color: #222; }
.ttm-cell { position: relative; }
.ttm { position: absolute; left: 125px; top: 0; font-size: 20px; line-height: 24px; color: #999; }
.more { position: absolute; left: 601px; top: 322px; width: 22px; height: 13px; }
.band-a { height: 16px; background: #eeeef2; border-bottom: 1px solid #e6e6e8; }

/* tabs */
.tabs { display: flex; height: 124px; border-bottom: 2px solid #e6e6e8; position: relative; }
.tab { width: 210px; display: flex; justify-content: center; position: relative; font-size: 58px; color: #222; }
.tab span { display: block; padding: 29px 3px 20px; line-height: 68px; height: 124px; border-bottom: 7px solid transparent; white-space: nowrap; }
.tab-on span { border-bottom-color: #d04848; padding-left: 0; padding-right: 0; margin-left: 8px; }
.tab-week span { margin-left: 6px; }
.tab-more span { margin-left: 6px; }
.tab-more::after { content: ""; position: absolute; right: 22px; bottom: 27px; border-left: 16px solid transparent; border-bottom: 14px solid #333; }
.tab-menu { position: absolute; left: 1090px; top: 6px; width: 134px; height: 113px; display: flex; align-items: center; justify-content: center; border-left: 2px solid #eee; box-shadow: -10px 0 14px -10px rgba(0,0,0,.25); background: #fff; padding-left: 4px; }

/* ma row */
.ma-row { display: flex; align-items: center; height: 68px; padding-left: 24px; }
.chip { background: #f0f0f4; color: #666; font-size: 33px; line-height: 37px; height: 37px; white-space: nowrap; }
.ma-row .chip { width: 123px; }
.ma-row .chip-end { width: 120px; margin-left: auto; margin-right: 14px; font-size: 32px; text-align: center; }
.caret { width: 0; height: 0; border-left: 11px solid transparent; border-right: 11px solid transparent; border-top: 15px solid #666; margin-left: 0; }
.ma { font-size: 32px; letter-spacing: -.2px; }
.ma-first { margin-left: 36px; }
.ma + .ar { margin-left: 7px; margin-right: 19px; width: 18px; height: 30px; }
.ar { width: 20px; height: 34px; display: block; flex: none; }
.ar-up { color: #c84343; }
.ar-dn { color: #3c9a2e; }
.c-black { color: #222; } .c-orange { color: #d6a046; } .c-mag { color: #c861d8; }
.c-yel { color: #e5b95c; } .c-gray { color: #887b7b; } .c-ora2 { color: #e0a848; } .c-mag2 { color: #c861d8; }

/* kline */
.kline { display: block; }
.c path, .c polyline { vector-effect: non-scaling-stroke; fill: none; }
.b { stroke: #5e9fe0; stroke-width: 2.6; }
.r { stroke: #cc4444; stroke-width: 2.6; }
.g { stroke: #46983a; stroke-width: 2.6; }
.o { stroke: #e0a848; stroke-width: 2.6; }
.l-blk { stroke: #2b2b2b; stroke-width: 2.8; }
.l-ora { stroke: #c99a3e; stroke-width: 2.8; }
.l-mag { stroke: #c35fd2; stroke-width: 2.8; }
.l-ma1 { stroke: #8a7c7c; stroke-width: 2.8; }
.l-ma2 { stroke: #e0a544; stroke-width: 2.8; }
.l-ma3 { stroke: #c55ed6; stroke-width: 3; }
.l-bd { stroke: #8c7f7f; stroke-width: 2.4; }
.l-dot { stroke-dasharray: 3 3; }
.axis text { font-size: 32px; fill: #666; font-family: "Liberation Sans", sans-serif; }
.mark-s text, .mark-b text { font-size: 34px; text-anchor: middle; font-family: "Liberation Sans", sans-serif; }
.mark-s { fill: #6f9fe8; }
.mark-b { fill: #d04040; }
.mark-b circle { fill: #e03a3a; }
.halo-b { opacity: .4; }
.mark-b .halo-r { opacity: .35; }
.fab circle { fill: #e5a0a6; opacity: .5; }
.c .fab-i path, .fab-i rect { stroke: #fff; stroke-width: 4; fill: none; opacity: .7; stroke-linecap: round; stroke-linejoin: round; }
.hint rect { fill: none; stroke: #a8a8a8; stroke-width: 1.6; }
.hint text { font-size: 36px; fill: #909090; text-anchor: middle; font-family: "Liberation Sans", sans-serif; }
.c .hint path { stroke: #9a9a9a; stroke-width: 3.4; }
.tick circle { fill: #e37679; }
.c .tick .tick-d { fill: #e4a93a; }
.dates { display: flex; justify-content: space-between; align-items: center; height: 50px; padding: 0 10px 0 15px; font-size: 37px; color: #8a8a8a; }

/* panes */
.pane { position: relative; padding-top: 2px; }
.pane-1 { height: 176px; }
.pane-2, .pane-3 { height: 177px; }
.pane-svg { position: absolute; left: 0; top: 0; display: block; }
.head { position: relative; display: flex; align-items: flex-start; padding-left: 15px; height: 39px; white-space: nowrap; }
.head-tall { height: 50px; }
.chip-p { line-height: 39px; height: 39px; padding-left: 2px; }
.chip-vol { width: 107px; height: 50px; }
.chip-bd { width: 106px; }
.chip-md { width: 103px; }
.caret-p { margin: 13px 0 0 1px; border-left-width: 10px; border-right-width: 10px; border-top-width: 12px; }
.lg { font-size: 32.3px; line-height: 38px; }
.lg-first { margin-left: 36px; }
.head .ar { margin: 2px 15px 0 7px; }
.head-2 { padding-left: 18px; height: 40px; align-items: center; }
.head-2 .ar { margin: 0 0 0 6px; }
.pane-1 .c-yel { margin-right: 7px; }
.pane-3 .lg { font-size: 32px; }
.pane-3 .head .ar { margin-left: 4px; }

/* strategy */
.strategy { position: relative; height: 126px; display: flex; align-items: center; padding-left: 45px; border-top: 2px solid #eee; }
.st-label { font-size: 45px; margin-top: -5px; }
.st-tri { width: 0; height: 0; border-left: 11px solid transparent; border-right: 11px solid transparent; border-bottom: 14px solid #222; margin-left: 14px; margin-top: -4px; }
.pill { height: 62px; border-radius: 31px; background: #d84646; color: #fff; font-size: 45px; line-height: 60px; text-align: center; width: 200px; }
.pill-1 { margin-left: 55px; }
.pill-2 { width: 201px; margin-left: 55px; font-size: 47px; }
.st-item { font-size: 46px; margin-left: 55px; margin-top: -5px; }
.st-right { margin-left: auto; display: flex; height: 100%; align-self: stretch; background: #f6f7f9; box-shadow: -8px 0 12px -8px rgba(0,0,0,.25); }
.st-set { width: 150px; text-align: center; font-size: 53px; line-height: 124px; }
.st-chip { width: 109px; text-align: center; font-size: 53px; line-height: 124px; color: #f0a94a; border-left: 2px solid #ececee; }
.band-b { height: 16px; background: #eeeef2; border-bottom: 1px solid #e6e6e8; }

/* stock tabs */
.stabs { display: grid; grid-template-columns: repeat(6, 204px); height: 143px; border-bottom: 2px solid #e8e8ea; }
.stab { position: relative; text-align: center; font-size: 58px; line-height: 64px; padding-top: 40px; color: #222; }
.stab-on { color: #d84646; font-weight: 700; }
.stab-on::after { content: ""; position: absolute; left: 66px; top: 133px; width: 68px; height: 6px; border-radius: 3px; background: #d04848; }
.spacer { height: 21px; border-bottom: 2px solid #eeeef0; }
.section { display: flex; height: 83px; overflow: hidden; padding-left: 49px; align-items: flex-start; }
.sec-bar { width: 11px; height: 60px; margin-top: 41px; background: #d04040; }
.sec-title { font-size: 67px; line-height: 84px; margin: 25px 0 0 22px; white-space: nowrap; }

/* bottom */
.bottom { display: grid; grid-template-columns: repeat(4, 248px) 232px; height: 159px; background: #f6f7f9; border-top: 2px solid #e8e8ea; }
.cell { position: relative; display: flex; align-items: center; justify-content: center; font-size: 58px; gap: 28px; }
.cell-t { margin-top: -6px; }
.cell::after { content: ""; position: absolute; right: 0; top: 28px; height: 97px; width: 2px; background: #ecedf0; }
.cell-more::after { display: none; }
.cell-watch { padding-left: 6px; }
.cell-first { flex-direction: column; justify-content: flex-start; gap: 0; padding-top: 20px; }
.cell-tri { width: 0; height: 0; border-left: 11px solid transparent; border-right: 11px solid transparent; border-bottom: 13px solid #333; }
.cell-name { font-size: 45px; line-height: 52px; margin-top: 8px; }
.cell-val { font-size: 43px; line-height: 50px; margin-top: 14px; color: #4a9a30; }
.cell-more { gap: 8px; }
.dot { width: 15px; height: 15px; border-radius: 50%; background: #222; }
.notice { position: absolute; left: 162px; top: 32px; width: 23px; height: 24px; border-radius: 50%; background: #d84040; }
.sysnav { height: 130px; background: #f9f9fa; display: flex; align-items: center; justify-content: center; gap: 207px; }
```
